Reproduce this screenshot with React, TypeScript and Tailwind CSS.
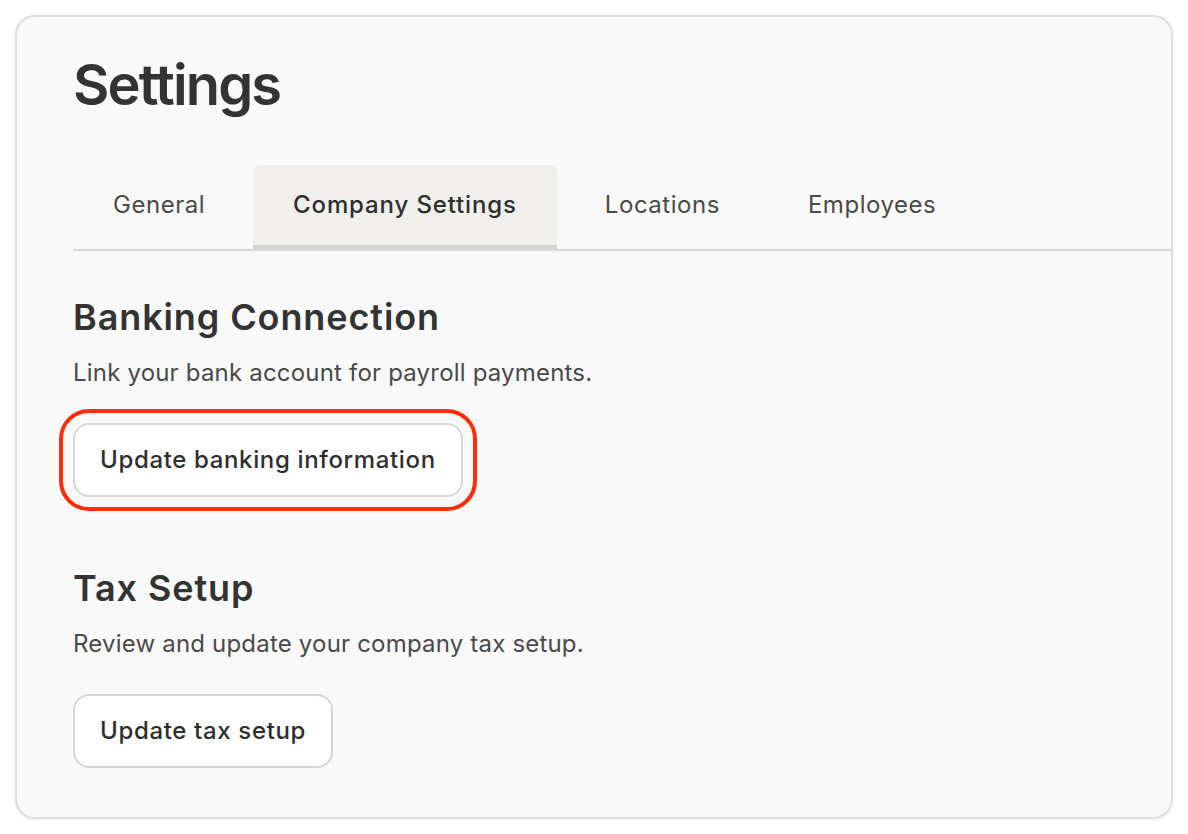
const tabs = ["General", "Company Settings", "Locations", "Employees"];

function Section({
  title,
  text,
  action,
  highlighted,
}: {
  title: string;
  text: string;
  action: string;
  highlighted?: boolean;
}) {
  return (
    <section className="flex flex-col items-start">
      <h2 className="text-[36px] leading-[44px] font-semibold tracking-[0.025em] text-[#333333]">
        {title}
      </h2>
      <p className="mt-[18px] text-[24px] leading-[32px] tracking-[0.008em] text-[#4a4a4a]">{text}</p>
      <button
        className={
          "mt-[34px] h-[74px] rounded-[16px] border-2 border-[#d6d6d6] bg-white px-[25px] text-[24px] leading-[32px] font-medium tracking-[0.027em] text-[#2e2e2e] " +
          (highlighted ? "outline-[4px] outline-solid outline-[#ff2d0a] outline-offset-[10px]" : "")
        }
      >
        {action}
      </button>
    </section>
  );
}

export default function App() {
  const active = "Company Settings";
  return (
    <div
      className="min-h-screen bg-white p-[15px]"
      style={{ fontFamily: "Inter, 'Noto Sans', sans-serif" }}
    >
      <div className="h-[804px] w-[1158px] rounded-[20px] border-2 border-[#dedede] bg-[#f9f9f9] pl-[56px] pt-[34px] shadow-[0_1px_3px_rgba(0,0,0,0.08)]">
        <h1 className="text-[56px] leading-[68px] font-semibold tracking-[-0.033em] text-[#333333]">
          Settings
        </h1>

        <div className="mt-[46px] flex gap-2 border-b-2 border-[#d9d9d9]">
          {tabs.map((t) => (
            <div
              key={t}
              className={
                t === active
                  ? "flex h-[84px] items-center rounded-t-[8px] border-b-4 border-[#d5d5d3] bg-[#f0efeb] px-10 text-[24px] font-medium tracking-[0.036em] text-[#2e2e2e]"
                  : "flex h-[84px] items-center border-b-4 border-transparent px-10 text-[24px] tracking-[0.022em] text-[#4a4a4a]"
              }
            >
              {t}
            </div>
          ))}
        </div>

        <div className="mt-[44px] flex flex-col gap-[69px]">
          <Section
            title="Banking Connection"
            text="Link your bank account for payroll payments."
            action="Update banking information"
            highlighted
          />
          <Section
            title="Tax Setup"
            text="Review and update your company tax setup."
            action="Update tax setup"
          />
        </div>
      </div>
    </div>
  );
}
